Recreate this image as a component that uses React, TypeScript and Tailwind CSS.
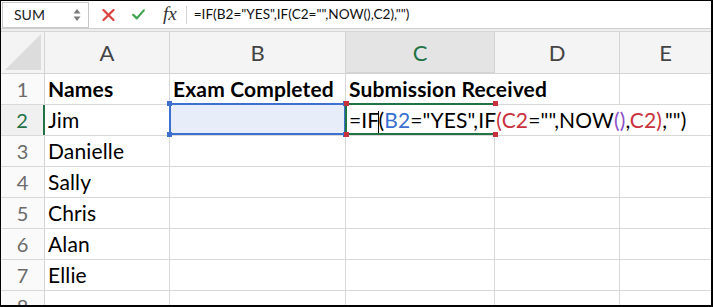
import React from "react";

const FONT = "font-['Lato','Open_Sans',sans-serif]";

function Formula({ size }: { size: "bar" | "cell" }) {
  const blue = "text-[#3b6fd0]";
  const red = "text-[#c8323c]";
  const purple = "text-[#8a4fc8]";
  return (
    <span className="whitespace-nowrap">
      <span>=IF</span>
      {size === "cell" && (
        <span className="inline-block w-px h-[22px] bg-black align-middle -mx-px relative -top-[1px]" />
      )}
      <span>(</span>
      <span className={size === "cell" ? blue : ""}>B2</span>
      <span>="YES",IF</span>
      <span className={size === "cell" ? red : ""}>(C2</span>
      <span>="",NOW</span>
      <span className={size === "cell" ? purple : ""}>()</span>
      <span>,</span>
      <span className={size === "cell" ? red : ""}>C2)</span>
      <span>,"")</span>
    </span>
  );
}

const cols = [
  { key: "A", w: "w-[125px]" },
  { key: "B", w: "w-[176px]" },
  { key: "C", w: "w-[149px]" },
  { key: "D", w: "w-[125px]" },
  { key: "E", w: "flex-1" },
];

const rows: { n: number; a: string; b?: string; c?: "head" | "formula" }[] = [
  { n: 1, a: "Names", b: "Exam Completed", c: "head" },
  { n: 2, a: "Jim", c: "formula" },
  { n: 3, a: "Danielle" },
  { n: 4, a: "Sally" },
  { n: 5, a: "Chris" },
  { n: 6, a: "Alan" },
  { n: 7, a: "Ellie" },
  { n: 8, a: "" },
];

export default function App() {
  return (
    <div
      className={`${FONT} w-[713px] h-[307px] bg-white border-black border-t border-l border-r-2 border-b-2 overflow-hidden relative`}
    >
      {/* formula bar */}
      <div className="h-[28px] flex items-center border-b border-[#cfcfcf]">
        <div className="ml-[1px] w-[87px] h-[26px] border border-[#c9c9c9] flex items-center pl-[11px] pr-[7px] text-[14px] text-[#222]">
          <span className="flex-1">SUM</span>
          <svg width="8" height="14" viewBox="0 0 8 14">
            <path d="M4 1 L7.5 5.5 L0.5 5.5 Z" fill="#7a7a7a" />
            <path d="M4 13 L7.5 8.5 L0.5 8.5 Z" fill="#7a7a7a" />
          </svg>
        </div>
        <svg className="ml-[13px]" width="13" height="12" viewBox="0 0 13 12">
          <path d="M1.5 1 L11.5 11 M11.5 1 L1.5 11" stroke="#d9423d" strokeWidth="2.2" strokeLinecap="round" />
        </svg>
        <svg className="ml-[17px]" width="13" height="11" viewBox="0 0 13 11">
          <path d="M1.2 5.8 L4.8 9.4 L11.8 1.4" stroke="#3fa34d" strokeWidth="2.2" fill="none" strokeLinecap="round" strokeLinejoin="round" />
        </svg>
        <span className="ml-[18px] font-['Liberation_Serif',serif] italic text-[19px] text-[#333] leading-none -mt-[3px]">
          fx
        </span>
        <div className="ml-[9px] w-px h-[18px] bg-[#d3d3d3]" />
        <div className="ml-[7px] text-[13.6px] text-[#111]">
          <Formula size="bar" />
        </div>
      </div>
      <div className="h-[2px] bg-[#ededed] border-b border-[#d6d6d6] box-content" />

      {/* header row */}
      <div className="flex h-[42px] border-b border-[#d4d4d4] bg-[#f4f4f4]">
        <div className="w-[44px] border-r border-[#d4d4d4] relative">
          <svg className="absolute right-[3px] bottom-[3px]" width="36" height="36" viewBox="0 0 36 36">
            <path d="M36 0 L36 36 L0 36 Z" fill="#dcdcdc" />
          </svg>
        </div>
        {cols.map((c) => (
          <div
            key={c.key}
            className={`${c.w} flex items-center justify-center text-[22px] ${
              c.key === "C"
                ? "bg-[#e4e4e4] text-[#217346] border-b-2 border-[#217346] -mb-px"
                : "text-[#444]"
            } ${c.key !== "E" ? "border-r border-[#d4d4d4]" : ""}`}
          >
            {c.key}
          </div>
        ))}
      </div>

      {/* rows */}
      {rows.map((r) => (
        <div key={r.n} className="flex h-[31px] border-b border-[#d8d8d8] text-[21px] tracking-[0.15px] text-black">
          <div
            className={`w-[44px] flex items-center justify-center text-[20px] tracking-normal ${
              r.n === 2
                ? "bg-[#f0f0f0] text-[#217346] border-r-2 border-[#217346]"
                : "bg-[#fafafa] text-[#6b6b6b] border-r border-[#d4d4d4]"
            }`}
          >
            {r.n}
          </div>
          <div className={`w-[125px] border-r border-[#d8d8d8] flex items-center pl-[3px] ${r.n === 1 ? "font-bold" : ""}`}>
            {r.a}
          </div>
          <div className={`w-[176px] border-r border-[#d8d8d8] flex items-center pl-[3px] ${r.n === 1 ? "font-bold" : ""}`}>
            {r.b}
          </div>
          <div
            className={`w-[149px] flex items-center pl-[3px] relative z-10 whitespace-nowrap overflow-visible ${
              r.c ? "" : "border-r border-[#d8d8d8]"
            } ${r.n === 1 ? "font-bold" : ""}`}
          >
            {r.c === "head" && <span>Submission Received</span>}
            {r.c === "formula" && <Formula size="cell" />}
          </div>
          <div className={`w-[125px] ${r.c === "formula" ? "" : "border-r border-[#d8d8d8]"}`} />
          <div className="flex-1" />
        </div>
      ))}

      {/* B2 range highlight */}
      <div className="absolute left-[168px] top-[102px] w-[177px] h-[32px] bg-[#e8eef9] border-2 border-[#3d70cf]" />
      <div className="absolute left-[166px] top-[100px] w-[5px] h-[5px] bg-[#3d70cf]" />
      <div className="absolute left-[342px] top-[100px] w-[5px] h-[5px] bg-[#3d70cf]" />
      <div className="absolute left-[166px] top-[131px] w-[5px] h-[5px] bg-[#3d70cf]" />
      <div className="absolute left-[342px] top-[131px] w-[5px] h-[5px] bg-[#3d70cf]" />

      {/* C2 active cell */}
      <div className="absolute left-[344px] top-[102px] w-[150px] h-[32px] border-t-2 border-b-2 border-l-2 border-[#217346] z-20 pointer-events-none" />
      <div className="absolute left-[343px] top-[100px] w-[5px] h-[5px] bg-[#c8323c] z-30" />
      <div className="absolute left-[492px] top-[100px] w-[5px] h-[5px] bg-[#c8323c] z-30" />
      <div className="absolute left-[343px] top-[131px] w-[5px] h-[5px] bg-[#c8323c] z-30" />
      <div className="absolute left-[492px] top-[131px] w-[5px] h-[5px] bg-[#c8323c] z-30" />
    </div>
  );
}
